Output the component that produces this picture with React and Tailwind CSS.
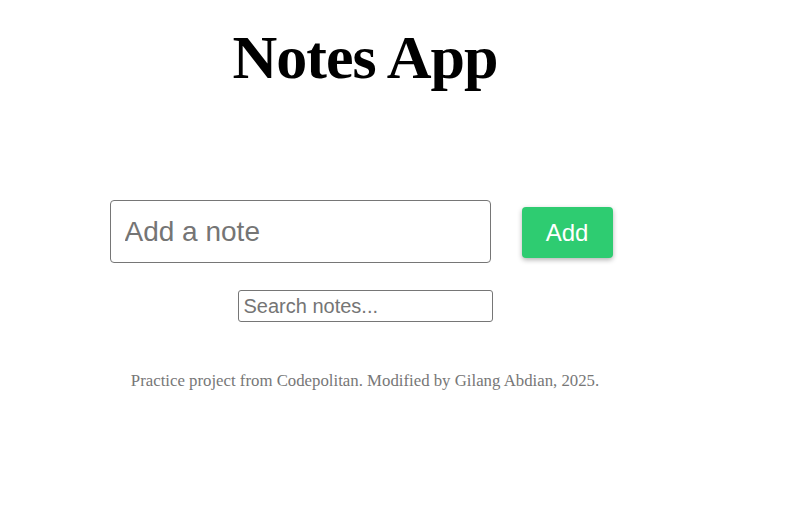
export default function App() {
  return (
    <div className="w-[730px] min-h-[522px] bg-white flex flex-col items-center font-['Liberation_Sans',Arial,sans-serif]">
      <h1 className="mt-[22px] text-[62px] leading-[70px] font-bold tracking-[-1px] text-black font-['Liberation_Serif',serif]">
        Notes App
      </h1>
      <div className="mt-[108px] flex items-center gap-[31px] ml-[-8px]">
        <input
          placeholder="Add a note"
          className="w-[381px] h-[63px] border border-[#767676] rounded-[4px] px-[14px] text-[28px] text-black placeholder:text-[#757575] outline-none"
        />
        <button className="mt-[2px] w-[91px] h-[51px] bg-[#2ecc71] text-white text-[24px] rounded-[4px] shadow-[0_2px_5px_rgba(0,0,0,0.3)]">
          Add
        </button>
      </div>
      <input
        placeholder="Search notes..."
        className="mt-[27px] w-[255px] h-[32px] border border-[#767676] rounded-[3px] px-[5px] text-[20px] text-black placeholder:text-[#757575] outline-none"
      />
      <p className="mt-[46px] text-[16.8px] text-[#777777] font-['Liberation_Serif',serif]">
        Practice project from Codepolitan. Modified by Gilang Abdian, 2025.
      </p>
    </div>
  );
}
